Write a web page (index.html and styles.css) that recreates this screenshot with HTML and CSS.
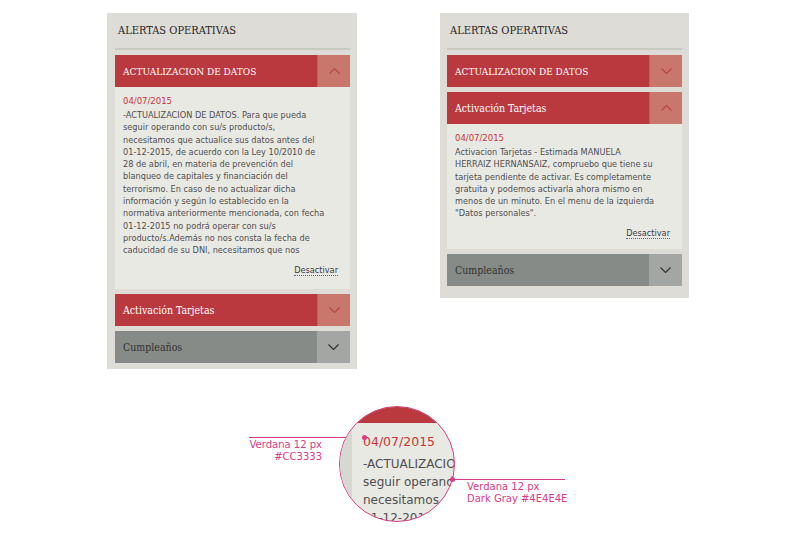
FILE: index.html
```html
<!DOCTYPE html>
<html lang="es">
<head>
<meta charset="utf-8">
<title>Alertas operativas</title>
<link rel="stylesheet" href="styles.css">
</head>
<body>
<div class="page">
  <div class="panels">
    <section class="panel panel--left">
      <h2 class="panel-title">ALERTAS OPERATIVAS</h2>
      <div class="acc acc--red acc--open">
        <div class="acc-head">
          <span class="acc-label">ACTUALIZACION DE DATOS</span>
          <span class="acc-toggle"><svg width="11" height="6" viewBox="0 0 11 6"><path d="M0.5 5.5 L5.5 0.5 L10.5 5.5" fill="none" stroke="currentColor" stroke-width="1.1"/></svg></span>
        </div>
        <div class="acc-body acc-body--long">
          <p class="acc-date">04/07/2015</p>
          <p class="acc-text acc-text--long">-ACTUALIZACION DE DATOS. Para que pueda<br>seguir operando con su/s producto/s,<br>necesitamos que actualice sus datos antes del<br>01-12-2015, de acuerdo con la Ley 10/2010 de<br>28 de abril, en materia de prevención del<br>blanqueo de capitales y financiación del<br>terrorismo. En caso de no actualizar dicha<br>información y según lo establecido en la<br>normativa anteriormente mencionada, con fecha<br>01-12-2015 no podrá operar con su/s<br>producto/s.Además no nos consta la fecha de<br>caducidad de su DNI, necesitamos que nos</p>
          <div class="acc-actions"><a class="deactivate" href="#">Desactivar</a></div>
        </div>
      </div>
      <div class="acc acc--red">
        <div class="acc-head">
          <span class="acc-label acc-label--title">Activación Tarjetas</span>
          <span class="acc-toggle"><svg width="11" height="6" viewBox="0 0 11 6"><path d="M0.5 0.5 L5.5 5.5 L10.5 0.5" fill="none" stroke="currentColor" stroke-width="1.1"/></svg></span>
        </div>
      </div>
      <div class="acc acc--gray">
        <div class="acc-head">
          <span class="acc-label acc-label--title">Cumpleaños</span>
          <span class="acc-toggle"><svg width="11" height="6" viewBox="0 0 11 6"><path d="M0.5 0.5 L5.5 5.5 L10.5 0.5" fill="none" stroke="currentColor" stroke-width="1.1"/></svg></span>
        </div>
      </div>
    </section>

    <section class="panel panel--right">
      <h2 class="panel-title">ALERTAS OPERATIVAS</h2>
      <div class="acc acc--red">
        <div class="acc-head">
          <span class="acc-label">ACTUALIZACION DE DATOS</span>
          <span class="acc-toggle"><svg width="11" height="6" viewBox="0 0 11 6"><path d="M0.5 0.5 L5.5 5.5 L10.5 0.5" fill="none" stroke="currentColor" stroke-width="1.1"/></svg></span>
        </div>
      </div>
      <div class="acc acc--red acc--open">
        <div class="acc-head">
          <span class="acc-label acc-label--title">Activación Tarjetas</span>
          <span class="acc-toggle"><svg width="11" height="6" viewBox="0 0 11 6"><path d="M0.5 5.5 L5.5 0.5 L10.5 5.5" fill="none" stroke="currentColor" stroke-width="1.1"/></svg></span>
        </div>
        <div class="acc-body">
          <p class="acc-date">04/07/2015</p>
          <p class="acc-text">Activacion Tarjetas - Estimada MANUELA<br>HERRAIZ HERNANSAIZ, compruebo que tiene su<br>tarjeta pendiente de activar. Es completamente<br>gratuita y podemos activarla ahora mismo en<br>menos de un minuto. En el menu de la izquierda<br>"Datos personales".</p>
          <div class="acc-actions"><a class="deactivate" href="#">Desactivar</a></div>
        </div>
      </div>
      <div class="acc acc--gray">
        <div class="acc-head">
          <span class="acc-label acc-label--title">Cumpleaños</span>
          <span class="acc-toggle"><svg width="11" height="6" viewBox="0 0 11 6"><path d="M0.5 0.5 L5.5 5.5 L10.5 0.5" fill="none" stroke="currentColor" stroke-width="1.1"/></svg></span>
        </div>
      </div>
    </section>
  </div>

  <div class="stage">
    <div class="spec spec--date">Verdana 12 px<br>#CC3333</div>
    <div class="leader leader--date"></div>
    <div class="loupe">
      <div class="loupe-band"></div>
      <div class="loupe-body">
        <div class="loupe-strip"></div>
        <div class="loupe-content">
          <p class="loupe-date">04/07/2015</p>
          <p class="loupe-text">-ACTUALIZACION<br>seguir operando<br>necesitamos<br>01-12-2015</p>
        </div>
      </div>
    </div>
    <span class="dot dot--date"></span>
    <div class="leader leader--text"></div>
    <span class="dot dot--text"></span>
    <div class="spec spec--text">Verdana 12 px<br>Dark Gray #4E4E4E</div>
  </div>
</div>
</body>
</html>
```

FILE: styles.css
```css
* { box-sizing: border-box; }

html, body {
  margin: 0;
  padding: 0;
  background: #ffffff;
}

body {
  font-family: "DejaVu Sans", Verdana, sans-serif;
  color: #4e4e4e;
  width: 800px;
  height: 533px;
  overflow: hidden;
}

.page {
  width: 800px;
  height: 533px;
}

.panels {
  display: flex;
  align-items: flex-start;
  gap: 83px;
  height: 380px;
  padding: 13px 0 0 107px;
}

.panel {
  width: 250px;
  background: #dddcd6;
  padding: 0 7px 6px 8px;
}

.panel--right {
  width: 249px;
  padding: 0 7px 12px 7px;
}

.panel-title {
  margin: 0;
  height: 37px;
  padding: 11px 0 0 3px;
  border-bottom: 2px solid #c9c9c3;
  font-family: "DejaVu Serif", serif;
  font-stretch: condensed;
  font-weight: normal;
  font-size: 11px;
  line-height: 14px;
  color: #1f1f1f;
}

.acc {
  margin-top: 5px;
}

.acc--open {
  margin-bottom: 1px;
}

.acc-head {
  display: flex;
  height: 32px;
}

.acc-label {
  flex: 1;
  display: flex;
  align-items: center;
  padding-left: 8px;
  font-family: "DejaVu Serif", serif;
  font-stretch: condensed;
  font-size: 10px;
  color: #ffffff;
}

.acc-label--title {
  font-size: 10.5px;
}

.acc-toggle {
  width: 33px;
  display: flex;
  align-items: center;
  justify-content: center;
}

.acc--red .acc-label { background: #b9393f; }
.acc--red .acc-toggle {
  background: #c9766c;
  color: #b84249;
  border-left: 1px solid #c25f5c;
}

.acc--gray .acc-label {
  background: #878b87;
  color: #2f312f;
}
.acc--gray .acc-toggle {
  background: #a3a6a2;
  color: #2c2c2c;
}

.acc-body {
  background: #e9e9e4;
  padding: 8px 12px 10px 8px;
}

.acc-body--long {
  padding-bottom: 13px;
}

.acc-date {
  margin: 0 0 2px;
  font-size: 8.5px;
  line-height: 12px;
  color: #cc3333;
}

.acc-text {
  margin: 0;
  font-size: 8.2px;
  line-height: 12.3px;
  color: #4e4e4e;
  white-space: nowrap;
}

.acc-text--long {
  margin-bottom: 8px;
}

.acc-actions {
  margin-top: 8px;
  display: flex;
  justify-content: flex-end;
  line-height: 12px;
}

.deactivate {
  font-size: 8.2px;
  color: #3c3c3c;
  text-decoration: none;
  border-bottom: 1px dotted #4b5fae;
  line-height: 10px;
}

/* annotation stage */
.stage {
  position: relative;
  height: 153px;
}

.spec {
  position: absolute;
  font-size: 10px;
  line-height: 12px;
  color: #dc3a84;
}

.spec--date {
  left: 222px;
  top: 59px;
  width: 100px;
  text-align: right;
}

.spec--text {
  left: 467px;
  top: 101px;
}

.leader {
  position: absolute;
  height: 1px;
  background: #dc3a84;
}

.leader--date {
  left: 249px;
  top: 57px;
  width: 114px;
}

.leader--text {
  left: 452px;
  top: 99px;
  width: 113px;
}

.dot {
  position: absolute;
  width: 5px;
  height: 5px;
  border-radius: 50%;
  background: #dc3a84;
}

.dot--date { left: 362px; top: 55px; }
.dot--text { left: 450px; top: 97px; }

.loupe {
  position: absolute;
  left: 339px;
  top: 26px;
  width: 116px;
  height: 116px;
  border-radius: 50%;
  border: 1.5px solid #dc3a84;
  overflow: hidden;
  background: #e9e9e4;
  display: flex;
  flex-direction: column;
}

.loupe-band {
  height: 16px;
  background: #b9393f;
  flex: none;
}

.loupe-body {
  flex: 1;
  display: flex;
}

.loupe-strip {
  width: 12px;
  background: #d8d8d2;
  flex: none;
}

.loupe-content {
  padding: 10px 0 0 11px;
  white-space: nowrap;
}

.loupe-date {
  margin: 0 0 4px;
  font-size: 12.5px;
  line-height: 18px;
  color: #cc3333;
}

.loupe-text {
  margin: 0;
  font-size: 12px;
  line-height: 18px;
  color: #4e4e4e;
}
```
